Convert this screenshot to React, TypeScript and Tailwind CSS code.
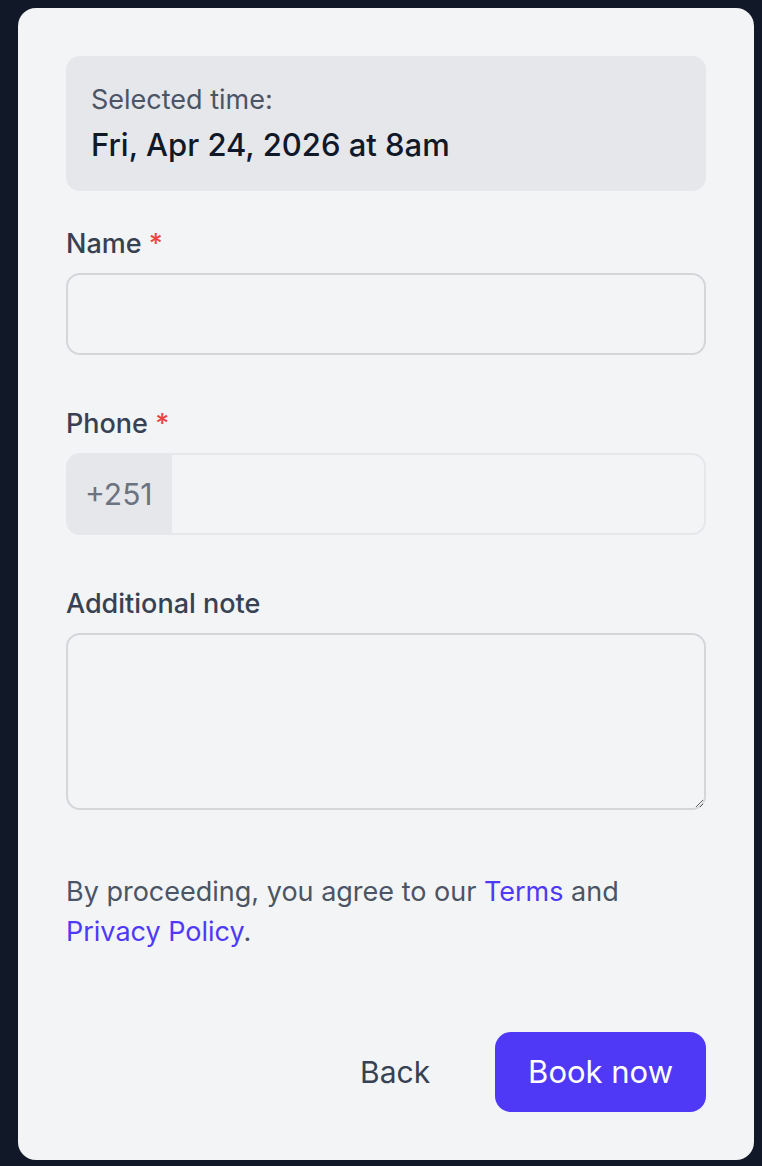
export default function App() {
  return (
    <div
      className="min-h-screen bg-[#111827] pl-[18px] pr-[8px] pt-[8px] pb-[6px]"
      style={{ fontFamily: "Inter, 'Noto Sans', sans-serif" }}
    >
      <div className="rounded-[18px] bg-[#f3f4f6] px-[48px] pt-[48px] pb-[48px]">
        {/* selected time */}
        <div className="rounded-[14px] bg-[#e5e7eb] px-[25px] pt-[24px] pb-[26px]">
          <p className="text-[27px] leading-[40px] text-[#4b5563]">Selected time:</p>
          <p className="mt-[5px] text-[31px] font-medium leading-[40px] text-[#111827]">
            Fri, Apr 24, 2026 at 8am
          </p>
        </div>

        {/* name */}
        <div className="mt-[33px]">
          <label className="block text-[27px] font-medium leading-[40px] text-[#374151]">
            Name <span className="text-[#ef4444]">*</span>
          </label>
          <input
            type="text"
            className="mt-[9px] block h-[82px] w-full rounded-[14px] border-2 border-[#d4d6da] bg-transparent px-[20px] text-[28px] outline-none"
          />
        </div>

        {/* phone */}
        <div className="mt-[49px]">
          <label className="block text-[27px] font-medium leading-[40px] text-[#374151]">
            Phone <span className="text-[#ef4444]">*</span>
          </label>
          <div className="mt-[9px] flex h-[82px] w-full overflow-hidden rounded-[14px] border-2 border-[#e5e7eb]">
            <span className="flex w-[104px] items-center bg-[#e5e7eb] pl-[17px] text-[30px] text-[#6b7280]">
              +251
            </span>
            <input type="tel" className="flex-1 bg-transparent px-[20px] text-[28px] outline-none" />
          </div>
        </div>

        {/* note */}
        <div className="mt-[49px]">
          <label className="block text-[27px] font-medium leading-[40px] text-[#374151]">
            Additional note
          </label>
          <textarea className="mt-[9px] block h-[177px] w-full rounded-[14px] border-2 border-[#d4d6da] bg-transparent px-[20px] py-[16px] text-[28px] outline-none" />
        </div>

        <p className="mt-[62px] text-[27px] leading-[40px] text-[#4b5563]">
          By proceeding, you agree to our <a className="text-[#4f39f6]">Terms</a> and{" "}
          <a className="text-[#4f39f6]">Privacy Policy</a>.
        </p>

        <div className="mt-[80px] flex items-center justify-end gap-[32px]">
          <button className="h-[80px] px-[33px] text-[30px] text-[#374151]">Back</button>
          <button className="h-[80px] rounded-[16px] bg-[#4f39f6] px-[33px] text-[31px] text-white">
            Book now
          </button>
        </div>
      </div>
    </div>
  );
}
